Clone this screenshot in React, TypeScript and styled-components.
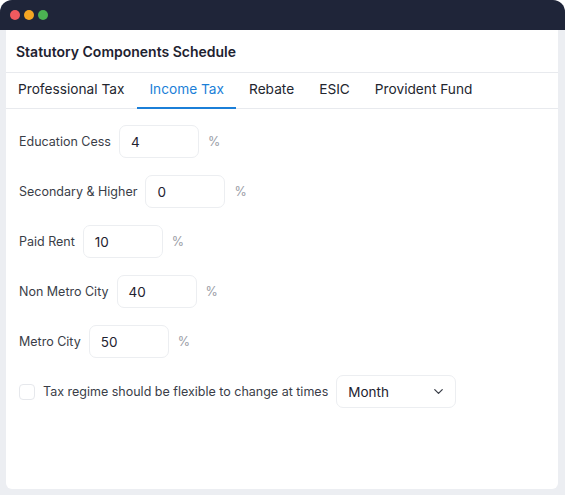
import styled, { createGlobalStyle } from "styled-components";

const GlobalStyle = createGlobalStyle`
  html, body {
    margin: 0;
    padding: 0;
    background: #ffffff;
  }
  body {
    font-family: Inter, "Noto Sans", sans-serif;
    -webkit-font-smoothing: antialiased;
  }
  * {
    box-sizing: border-box;
  }
`;

const Window = styled.div`
  width: 565px;
  height: 495px;
  display: flex;
  flex-direction: column;
  background: #eceef2;
  border-radius: 12px 12px 0 0;
  overflow: hidden;
`;

const TitleBar = styled.div`
  height: 30px;
  flex-shrink: 0;
  background: #1f2539;
  display: flex;
  align-items: center;
  gap: 4px;
  padding-left: 10px;
`;

const Dot = styled.span<{ $color: string }>`
  width: 10px;
  height: 10px;
  border-radius: 50%;
  background: ${(p) => p.$color};
`;

const Panel = styled.div`
  flex: 1;
  margin: 0 7px 6px 6px;
  background: #ffffff;
  border-radius: 0 0 6px 6px;
  display: flex;
  flex-direction: column;
`;

const Heading = styled.h1`
  margin: 0;
  height: 43px;
  display: flex;
  align-items: center;
  padding: 1px 10px 0;
  font-size: 14px;
  font-weight: 600;
  color: #1e2230;
  border-bottom: 1px solid #e8eaee;
`;

const Tabs = styled.nav`
  display: flex;
  height: 36px;
  border-bottom: 1px solid #e8eaee;
`;

const Tab = styled.div<{ $active?: boolean }>`
  display: flex;
  align-items: center;
  padding: 0 12px 2px;
  margin-right: 1px;
  font-size: 13.7px;
  color: ${(p) => (p.$active ? "#1b7fd8" : "#23262f")};
  border-bottom: 2px solid ${(p) => (p.$active ? "#1b7fd8" : "transparent")};
  margin-bottom: -1px;
`;

const Form = styled.div`
  display: flex;
  flex-direction: column;
  gap: 17px;
  padding: 16px 13px 0;
`;

const Row = styled.div`
  display: flex;
  align-items: center;
  gap: 8px;
  font-size: 12.5px;
  color: #3a3e48;
`;

const Input = styled.div`
  width: 80px;
  height: 33px;
  border: 1px solid #eceef1;
  border-radius: 7px;
  display: flex;
  align-items: center;
  padding-left: 11px;
  font-size: 13.5px;
  color: #1e2230;
`;

const Percent = styled.span`
  color: #9a9da6;
  font-size: 12.5px;
  margin-left: 1px;
`;

const CheckRow = styled(Row)`
  gap: 0;
`;

const Checkbox = styled.span`
  width: 16px;
  height: 16px;
  border: 1px solid #e6e8ec;
  border-radius: 4px;
  margin-right: 8px;
`;

const Select = styled.div`
  width: 120px;
  height: 33px;
  margin-left: 8px;
  border: 1px solid #eceef1;
  border-radius: 7px;
  display: flex;
  align-items: center;
  justify-content: space-between;
  padding: 0 9px 0 11px;
  font-size: 13.5px;
  color: #1e2230;
`;

const rows = [
  { label: "Education Cess", value: "4" },
  { label: "Secondary & Higher", value: "0" },
  { label: "Paid Rent", value: "10" },
  { label: "Non Metro City", value: "40" },
  { label: "Metro City", value: "50" },
];

const tabs = ["Professional Tax", "Income Tax", "Rebate", "ESIC", "Provident Fund"];

export default function App() {
  return (
    <>
      <GlobalStyle />
      <Window>
        <TitleBar>
          <Dot $color="#ef5a5f" />
          <Dot $color="#f5a623" />
          <Dot $color="#4bb152" />
        </TitleBar>
        <Panel>
          <Heading>Statutory Components Schedule</Heading>
          <Tabs>
            {tabs.map((t) => (
              <Tab key={t} $active={t === "Income Tax"}>
                {t}
              </Tab>
            ))}
          </Tabs>
          <Form>
            {rows.map((r) => (
              <Row key={r.label}>
                {r.label}
                <Input>{r.value}</Input>
                <Percent>%</Percent>
              </Row>
            ))}
            <CheckRow>
              <Checkbox />
              Tax regime should be flexible to change at times
              <Select>
                Month
                <svg width="15" height="15" viewBox="0 0 24 24" fill="none" stroke="#3a3e48" strokeWidth="2" strokeLinecap="round" strokeLinejoin="round">
                  <path d="M6 9l6 6 6-6" />
                </svg>
              </Select>
            </CheckRow>
          </Form>
        </Panel>
      </Window>
    </>
  );
}
